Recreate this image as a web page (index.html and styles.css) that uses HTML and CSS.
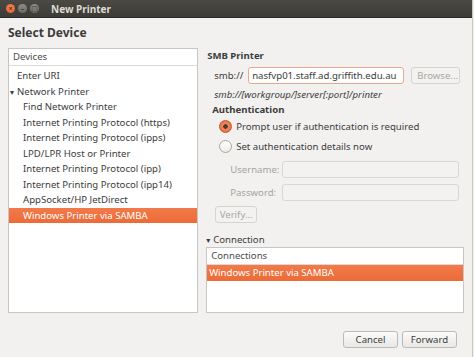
FILE: index.html
```html
<!DOCTYPE html>
<html lang="en">
<head>
    <meta charset="UTF-8">
    <title>New Printer</title>
    <link rel="stylesheet" href="styles.css">
</head>
<body>
<div class="window">
    <div class="titlebar">
        <span class="wbtn close">&#215;</span>
        <span class="wbtn">&#8211;</span>
        <span class="wbtn">&#9633;</span>
        <span class="title">New Printer</span>
    </div>

    <div class="content">
        <h1>Select Device</h1>

        <div class="main">
            <div class="list devices">
                <div class="list-head">Devices</div>
                <div class="list-body">
                    <div class="item lvl1">Enter URI</div>
                    <div class="item lvl0"><span class="tri">&#9662;</span>Network Printer</div>
                    <div class="item lvl2">Find Network Printer</div>
                    <div class="item lvl2">Internet Printing Protocol (https)</div>
                    <div class="item lvl2">Internet Printing Protocol (ipps)</div>
                    <div class="item lvl2">LPD/LPR Host or Printer</div>
                    <div class="item lvl2">Internet Printing Protocol (ipp)</div>
                    <div class="item lvl2">Internet Printing Protocol (ipp14)</div>
                    <div class="item lvl2">AppSocket/HP JetDirect</div>
                    <div class="item lvl2 selected">Windows Printer via SAMBA</div>
                </div>
            </div>

            <div class="panel">
                <div class="section-title">SMB Printer</div>
                <div class="smb-row">
                    <span class="prefix">smb://</span>
                    <input class="entry focused" type="text" value="nasfvp01.staff.ad.griffith.edu.au">
                    <button class="btn" disabled>Browse...</button>
                </div>
                <div class="hint">smb://[workgroup/]server[:port]/printer</div>
                <div class="section-title sub">Authentication</div>
                <label class="radio-row"><span class="radio checked"></span>Prompt user if authentication is required</label>
                <label class="radio-row"><span class="radio"></span>Set authentication details now</label>
                <div class="cred-row"><span class="cred-label">Username:</span><input class="entry disabled" type="text" disabled></div>
                <div class="cred-row"><span class="cred-label">Password:</span><input class="entry disabled" type="password" disabled></div>
                <button class="btn verify" disabled>Verify...</button>

                <div class="expander"><span class="tri">&#9662;</span>Connection</div>
                <div class="list connections">
                    <div class="list-head">Connections</div>
                    <div class="item selected">Windows Printer via SAMBA</div>
                </div>
            </div>
        </div>

        <div class="actions">
            <button class="btn action">Cancel</button>
            <button class="btn action">Forward</button>
        </div>
    </div>
</div>
</body>
</html>
```

FILE: styles.css
```css
body {
    margin: 0;
    background-color: #f2f1f0;
    font-family: 'Noto Sans', 'DejaVu Sans', sans-serif;
    font-size: 9.6px;
    color: #3c3c3c;
}

.window {
    width: 472px;
    height: 357px;
    border-right: 1px solid #c9c7c3;
    background-color: #f2f1f0;
    overflow: hidden;
}

.titlebar {
    height: 17px;
    display: flex;
    align-items: center;
    padding-left: 6px;
    background: linear-gradient(#4a4944, #3c3b37);
    border-bottom: 1px solid #2a2a27;
}

.wbtn {
    width: 9px;
    height: 9px;
    border-radius: 50%;
    margin-right: 3px;
    background: linear-gradient(#8d8c86, #6a6964);
    color: #3c3b37;
    font-size: 7px;
    line-height: 9px;
    text-align: center;
    font-weight: bold;
}

.wbtn.close {
    background: radial-gradient(circle at 50% 40%, #f58c5c, #e0521f);
    color: #5a2a14;
}

.title {
    margin-left: 9px;
    color: #dfdbd2;
    font-weight: bold;
    font-size: 10px;
}

.content {
    padding: 0 8px;
}

h1 {
    margin: 0;
    height: 30px;
    line-height: 30px;
    font-size: 12px;
    color: #3c3c3c;
}

.main {
    display: flex;
    gap: 8px;
    height: 265px;
}

.list {
    background-color: #fff;
    border: 1px solid #c8c6c2;
}

.devices {
    width: 189px;
    height: 263px;
}

.list-head {
    height: 16px;
    line-height: 16px;
    padding-left: 4px;
    border-bottom: 1px solid #dcdad5;
    color: #4c4c4c;
}

.list-body {
    padding-top: 2px;
}

.item {
    height: 15.5px;
    line-height: 15.5px;
    white-space: nowrap;
}

.lvl0 { padding-left: 1px; }
.lvl1 { padding-left: 8px; }
.lvl2 { padding-left: 14px; }

.tri {
    display: inline-block;
    width: 7px;
    font-size: 8px;
    color: #3c3c3c;
}

.item.selected {
    background: linear-gradient(#f27a4a, #ec6b37);
    color: #fff;
}

.panel {
    width: 259px;
    display: flex;
    flex-direction: column;
}

.section-title {
    height: 16px;
    line-height: 16px;
    font-weight: bold;
    padding-left: 1px;
}

.section-title.sub {
    height: 15px;
    line-height: 15px;
    margin-bottom: -1px;
    padding-left: 6px;
}

.smb-row {
    display: flex;
    align-items: center;
    margin-top: 3px;
    height: 17px;
}

.prefix {
    width: 42px;
    padding-left: 8px;
    box-sizing: border-box;
}

.entry {
    box-sizing: border-box;
    height: 17px;
    border: 1px solid #c9c6c0;
    border-radius: 3px;
    background-color: #fff;
    font-family: inherit;
    font-size: 9.6px;
    color: #3c3c3c;
    padding: 0 3px;
    margin: 0;
}

.entry.focused {
    width: 156px;
    border-color: #e9a78c;
}

.entry.disabled {
    background-color: #f3f2f1;
    border-color: #d9d7d3;
    flex: 1;
    margin-right: 5px;
}

.btn {
    box-sizing: border-box;
    height: 17px;
    margin: 0;
    padding: 0 5px;
    border: 1px solid #bdbab4;
    border-radius: 3px;
    background: linear-gradient(#fbfbfa, #e9e8e6);
    font-family: inherit;
    font-size: 9.6px;
    color: #3c3c3c;
}

.btn:disabled {
    color: #a9a7a3;
    border-color: #d6d4d0;
    background: #f3f2f1;
}

.smb-row .btn {
    margin-left: 7px;
    width: 49px;
}

.hint {
    margin-top: 3px;
    height: 15px;
    line-height: 15px;
    font-style: italic;
    padding-left: 8px;
}

.radio-row {
    display: flex;
    align-items: center;
    height: 20px;
    padding-left: 13px;
}

.radio {
    box-sizing: border-box;
    width: 13px;
    height: 13px;
    border-radius: 50%;
    border: 1px solid #a8a6a1;
    background: linear-gradient(#ffffff, #ecebe9);
    margin-right: 4px;
}

.radio.checked {
    border-color: #c4552a;
    background: radial-gradient(circle, #4a3a34 0, #4a3a34 2px, #f28a5c 2.5px, #e0622f 100%);
}

.cred-row {
    display: flex;
    align-items: center;
    margin-top: 3px;
    height: 20px;
}

.cred-label {
    width: 76px;
    padding-left: 24px;
    box-sizing: border-box;
    color: #a6a4a0;
}

.btn.verify {
    align-self: flex-start;
    margin-top: 4px;
    margin-left: 9px;
    width: 42px;
    padding: 0;
}

.expander {
    margin-top: 10px;
    height: 14px;
    line-height: 14px;
}

.connections {
    height: 64px;
}

.connections .item {
    padding-left: 2px;
}

.actions {
    display: flex;
    justify-content: flex-end;
    gap: 4px;
    margin-top: 18px;
    padding-right: 7px;
}

.btn.action {
    height: 17px;
    width: 55px;
}
```
